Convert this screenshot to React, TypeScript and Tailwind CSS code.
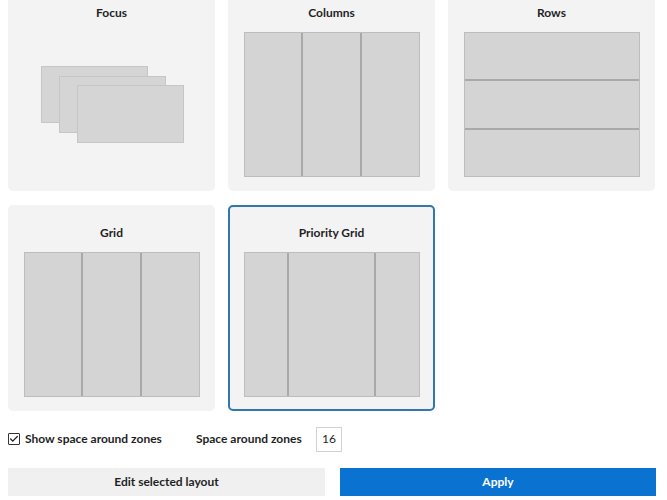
import { Check } from 'lucide-react'

const font = { fontFamily: 'Lato, "Noto Sans", Arial, sans-serif' }

function Card({ title, selected, children }: { title: string; selected?: boolean; children: React.ReactNode }) {
  return (
    <div
      className={
        'h-[206px] rounded-[5px] bg-[#f3f3f3] flex flex-col items-center border-2 ' +
        (selected ? 'border-[#2f77ad]' : 'border-transparent')
      }
    >
      <div className="mt-[17px] h-[18px] text-[12px] leading-[18px] font-bold text-[#1f1f1f]">{title}</div>
      <div className="mt-[10px] w-[176px] h-[145px]">{children}</div>
    </div>
  )
}

function Columns({ widths }: { widths: number[] }) {
  return (
    <div className="flex h-full w-full border border-[#bdbdbd] bg-[#d4d4d4] divide-x-2 divide-[#a9a9a9]">
      {widths.map((w, i) => (
        <div key={i} className="h-full bg-[#d4d4d4]" style={{ flex: w }} />
      ))}
    </div>
  )
}

export default function App() {
  return (
    <div className="w-[667px] h-[500px] overflow-hidden bg-white text-[#1f1f1f]" style={font}>
      <div className="-mt-[15px] pl-[8px] grid grid-cols-[207px_207px_207px] gap-x-[13px] gap-y-[14px]">
        <Card title="Focus">
          <div className="relative w-full h-full">
            <div className="absolute left-[17px] top-[34px] w-[107px] h-[57px] bg-[#d5d5d5] border border-[#c6c6c6]" />
            <div className="absolute left-[35px] top-[44px] w-[107px] h-[57px] bg-[#d5d5d5] border border-[#c6c6c6]" />
            <div className="absolute left-[53px] top-[53px] w-[107px] h-[58px] bg-[#d5d5d5] border border-[#c6c6c6]" />
          </div>
        </Card>
        <Card title="Columns">
          <Columns widths={[1, 1, 1]} />
        </Card>
        <Card title="Rows">
          <div className="flex flex-col h-full w-full border border-[#bdbdbd] bg-[#d4d4d4] divide-y-2 divide-[#a9a9a9]">
            <div className="flex-1" />
            <div className="flex-1" />
            <div className="flex-1" />
          </div>
        </Card>
        <Card title="Grid">
          <Columns widths={[1, 1, 1]} />
        </Card>
        <Card title="Priority Grid" selected>
          <Columns widths={[1, 2, 1]} />
        </Card>
      </div>

      <div className="mt-[15px] pl-[8px] flex items-center h-[26px] text-[12px] font-bold">
        <div className="w-[12px] h-[12px] border border-[#333] rounded-[1px] flex items-center justify-center bg-white">
          <Check size={10} strokeWidth={3} className="text-[#222]" />
        </div>
        <span className="ml-[5px] w-[171px]">Show space around zones</span>
        <span className="w-[120px]">Space around zones</span>
        <div className="w-[26px] h-[25px] border border-[#d2d2d2] flex items-center justify-center font-normal">16</div>
      </div>

      <div className="mt-[16px] pl-[8px] flex gap-[15px] text-[12px] font-bold">
        <div className="w-[317px] h-[28px] bg-[#f0f0f0] flex items-center justify-center">Edit selected layout</div>
        <div className="w-[316px] h-[28px] bg-[#0a72d1] text-white flex items-center justify-center">Apply</div>
      </div>
    </div>
  )
}
